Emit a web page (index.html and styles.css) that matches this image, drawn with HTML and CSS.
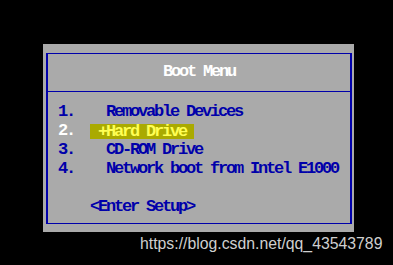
FILE: index.html
```html
<!DOCTYPE html>
<html>
<head>
<meta charset="utf-8">
<link rel="stylesheet" href="styles.css">
</head>
<body>
<div class="screen">
  <div class="panel">
    <div class="frame">
      <div class="title">Boot Menu</div>
      <div class="items">
        <div class="row">1.    Removable Devices</div>
        <div class="row"><span class="num-active">2.</span>  <span class="sel"> +Hard Drive </span></div>
        <div class="row">3.    CD-ROM Drive</div>
        <div class="row">4.    Network boot from Intel E1000</div>
        <div class="row"> </div>
        <div class="row">    &lt;Enter Setup&gt;</div>
      </div>
    </div>
  </div>
  <div class="watermark">https://blog.csdn.net/qq_43543789</div>
</div>
</body>
</html>
```
FILE: styles.css
```css
html, body {
  margin: 0;
  padding: 0;
  background: #000;
}
.screen {
  width: 393px;
  height: 265px;
  overflow: hidden;
  padding-top: 44px;
  box-sizing: border-box;
}
.panel {
  margin-left: 43px;
  width: 311px;
  height: 188px;
  background: #aaaaaa;
  padding: 9px 3px 0 3px;
  box-sizing: border-box;
}
.frame {
  width: 306px;
  height: 171px;
  box-sizing: border-box;
  border-left: 2px solid #0000aa;
  border-right: 2px solid #0000aa;
  border-top: 1px solid #0000aa;
  border-bottom: 1px solid #0000aa;
  font-family: "Liberation Mono", monospace;
  font-weight: bold;
  font-size: 17px;
  letter-spacing: -2.2px;
  color: #0000aa;
}
.title {
  height: 38px;
  box-sizing: border-box;
  padding-top: 8px;
  line-height: 19px;
  text-align: center;
  color: #ffffff;
  border-bottom: 1px solid #0000aa;
}
.items {
  padding: 10px 0 0 10px;
}
.row {
  white-space: pre;
  line-height: 19px;
  height: 19px;
}
.num-active {
  color: #ffffff;
}
.sel {
  display: inline-block;
  line-height: 15px;
  height: 15px;
  background: #aaaa00;
  color: #ffff55;
  position: relative;
  top: 1px;
}
.watermark {
  margin-top: 3px;
  padding-left: 140px;
  font-family: "Liberation Sans", Arial, sans-serif;
  font-size: 15.8px;
  color: #cfcfcf;
  white-space: nowrap;
}
```
